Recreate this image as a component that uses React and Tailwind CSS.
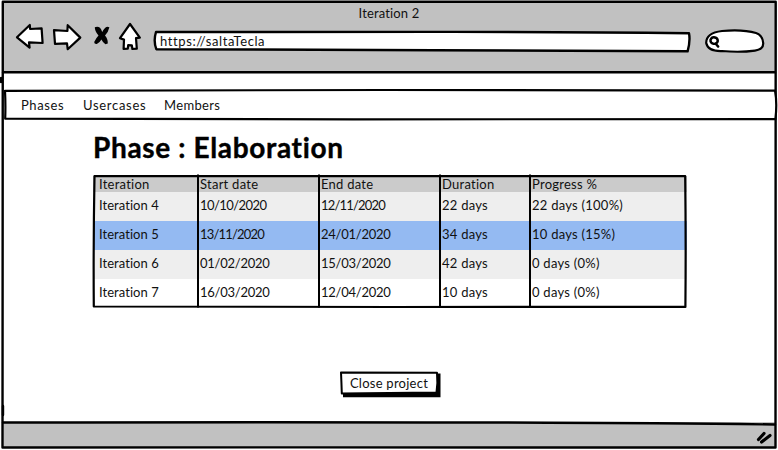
import React from "react";

const rows = [
  ["Iteration 4", "10/10/2020", "12/11/2020", "22 days", "22 days (100%)"],
  ["Iteration 5", "13/11/2020", "24/01/2020", "34 days", "10 days (15%)"],
  ["Iteration 6", "01/02/2020", "15/03/2020", "42 days", "0 days (0%)"],
  ["Iteration 7", "16/03/2020", "12/04/2020", "10 days", "0 days (0%)"],
];
const rowColors = ["bg-[#eeeeee]", "bg-[#94baf2]", "bg-[#eeeeee]", "bg-white"];
const headers = ["Iteration", "Start date", "End date", "Duration", "Progress %"];
const columns = "grid grid-cols-[107px_121px_121px_90px_155px] items-center";

function cellTracking(cell, column) {
  if (column === 0) return "tracking-[0.05px]";
  if (column === 1 || column === 2) {
    const ones = cell.split("1").length - 1;
    if (ones >= 3) return "tracking-[-0.8px]";
    if (ones === 2) return "tracking-[-0.55px]";
    return "-tracking-[0.25px] tracking-[-0.25px]";
  }
  return "";
}

// Hand-drawn outline that lies over the box it belongs to.
function Sketch({ children, fill = "none" }) {
  return (
    <svg
      className="pointer-events-none absolute left-0 top-0 h-full w-full overflow-visible"
      fill={fill}
      stroke="#000"
      strokeWidth="2.4"
      strokeLinecap="round"
      strokeLinejoin="round"
    >
      {children}
    </svg>
  );
}

function Toolbar() {
  return (
    <div className="flex h-[34px] items-start">
      <svg className="ml-[15px] h-[30px] w-[126px] shrink-0" viewBox="15 22 126 30" fill="#fff" stroke="#000" strokeWidth="2.2" strokeLinejoin="round" strokeLinecap="round">
        <path d="M17 37.3 29.8 25 30.1 29 41.6 28.4 42.6 43 29 42.4 29.6 47.6Z" />
        <path d="M54 30.2 67.4 31 67.7 25.2 80.3 37.6 67.7 49.2 67 43.4 55 43.8Z" />
        <path d="M94.8 27.2Q98 26.2 100 27.8Q101.3 29.2 102.2 32Q104.5 27.5 107.2 26.8L109.4 27.3Q108.4 32 105 35.6Q108 39 107.8 43.5L105.4 44.2Q102.8 42.6 101.4 39.6Q99.6 43 96.8 44Q94.2 44.3 94.2 42Q96 38 98.5 35.4Q94.8 31.5 94.8 27.2Z" fill="#000" stroke="none" />
        <path d="M130 24 139.8 37.6 136 38.2 136.8 48.6 132.4 49 131.8 45.3 128.2 45.1 127.8 48.7 123.6 49 124 39.6 120 38.2Z" />
      </svg>
      <div className="relative ml-[13px] mt-[9px] flex h-5 w-[536px] items-center">
        <Sketch fill="#fff">
          <path d="M2 1 Q140 1 280 .9 T535 2.3 Q536.5 10 533.6 20.3 L280 19.2 L2.3 18.2 Q-.8 10 2 1Z" />
        </Sketch>
        <span className="relative -mt-[1px] ml-[6px] text-[13px] tracking-[0.6px]">https://saltaTecla</span>
      </div>
      <div className="relative ml-[15px] mt-[7px] h-6 w-[60px]">
        <Sketch fill="#fff">
          <path d="M17 2 Q38 .2 51 4 Q57.5 6 58.2 14 Q58.5 20.5 50 21.6 Q35 23.7 17 22 Q3 22.5 1.2 14 Q1 4 17 2Z" strokeWidth="2.2" />
          <path d="M9 8.2 Q12.8 8.6 12.8 12 Q12 15.2 8.6 14.8 Q5 14 5.5 10.8 Q6.6 8 9 8.2Z M10.5 14.5 L13.2 17.6" />
        </Sketch>
      </div>
    </div>
  );
}

export default function App() {
  return (
    <div className="relative flex h-[450px] w-[778px] flex-col overflow-hidden bg-white px-[3px] pt-[2px] font-['Lato',sans-serif] text-[13px] leading-4 tracking-[0.25px] text-[#111]">
      <header className="h-[70px] shrink-0 bg-[#c1c1c1]">
        <h1 className="h-5 pt-[3px] text-center text-[13px] tracking-[0.15px]">Iteration 2</h1>
        <div className="-ml-[3px]"><Toolbar /></div>
      </header>

      <nav className="relative z-10 ml-[1px] mt-[17px] flex h-[32px] w-[773px] shrink-0 items-center pb-[1px]">
        <Sketch fill="#fff">
          <path d="M1 1.8 L380 1 L771 1.6 Q773.3 14 771.4 30.2 L350 30.3 L1.2 29.7 Q1.7 16 1 1.8Z" strokeWidth="2.2" />
        </Sketch>
        <a className="relative ml-[17px] w-[62px] tracking-[0.6px]">Phases</a>
        <a className="relative w-[81px] tracking-[0.7px]">Usercases</a>
        <a className="relative tracking-[0.35px]">Members</a>
      </nav>

      <main className="flex h-[301px] shrink-0 flex-col pl-[90px]">
        <h2 className="mt-[8px] h-[37px] text-[28px] font-bold leading-9 tracking-[0.65px] text-black [-webkit-text-stroke:0.4px_#000]">Phase : Elaboration</h2>
        <section className="relative mt-[10px] w-[594px]">
          <div className={columns + " h-[16px] bg-[#cbcbcb] pb-[2px] pl-[6px]"}>
            {headers.map((h, i) => (
              <div key={h} className={i === 0 ? "" : "-ml-[6px]"}>{h}</div>
            ))}
          </div>
          {rows.map((row, r) => (
            <div key={row[0]} className={columns + " h-[29px] pb-[4px] pl-[6px] " + rowColors[r]}>
              {row.map((cell, i) => (
                <div key={i} className={(i === 0 ? "" : "-ml-[6px] ") + cellTracking(cell, i)}>{cell}</div>
              ))}
            </div>
          ))}
          <Sketch>
            <path d="M1.5 0 L300 .1 L592.2 .2 Q593 65 592.4 130.9 L300 131 L.8 130.5 Q.3 68 1.5 0Z" strokeWidth="2.2" />
            <path d="M105 -1.5V131.5M226 -1.5V131.5M347 -1.5V131.5M437 -1.5V131.5" strokeWidth="2" strokeLinecap="butt" />
          </Sketch>
        </section>
        <button className="relative ml-[246px] mt-[63px] flex h-[27px] w-[101px] shrink-0 items-center justify-center pb-[4px]">
          <Sketch>
            <path d="M4 2.5H101.5V26.3H4Z" fill="#000" stroke="none" />
            <path d="M2 1.4 L98 1.8 Q99 12 97.5 21.5 L2.8 22.4 Q2.5 12 2 1.4Z" fill="#fff" strokeWidth="2" />
          </Sketch>
          <span className="relative -ml-[1px] tracking-[0.25px]">Close project</span>
        </button>
      </main>

      <footer className="flex h-[25px] shrink-0 items-center justify-end bg-[#c1c1c1] pr-[2px]">
        <svg className="mt-[6px] h-4 w-[17px]" viewBox="0 0 17 16" stroke="#000" strokeWidth="3.2" strokeLinecap="round" fill="none">
          <path d="M2.5 9.5 8 3.5M5.6 12 14 5.5" />
        </svg>
      </footer>

      <Sketch>
        <path d="M2.8 1.8 L388 1.8 L775.7 1.8 Q776.2 200 775.5 447.5 L300 447.4 L2.5 447.5 Q3.2 200 2.8 1.8Z" />
        <path d="M3 72.3 Q390 73.3 775 72.2" />
        <path d="M3 422.5 Q580 421.5 775 424.5" />
        <path d="M1 78V82M3 406V415" />
      </Sketch>
    </div>
  );
}
